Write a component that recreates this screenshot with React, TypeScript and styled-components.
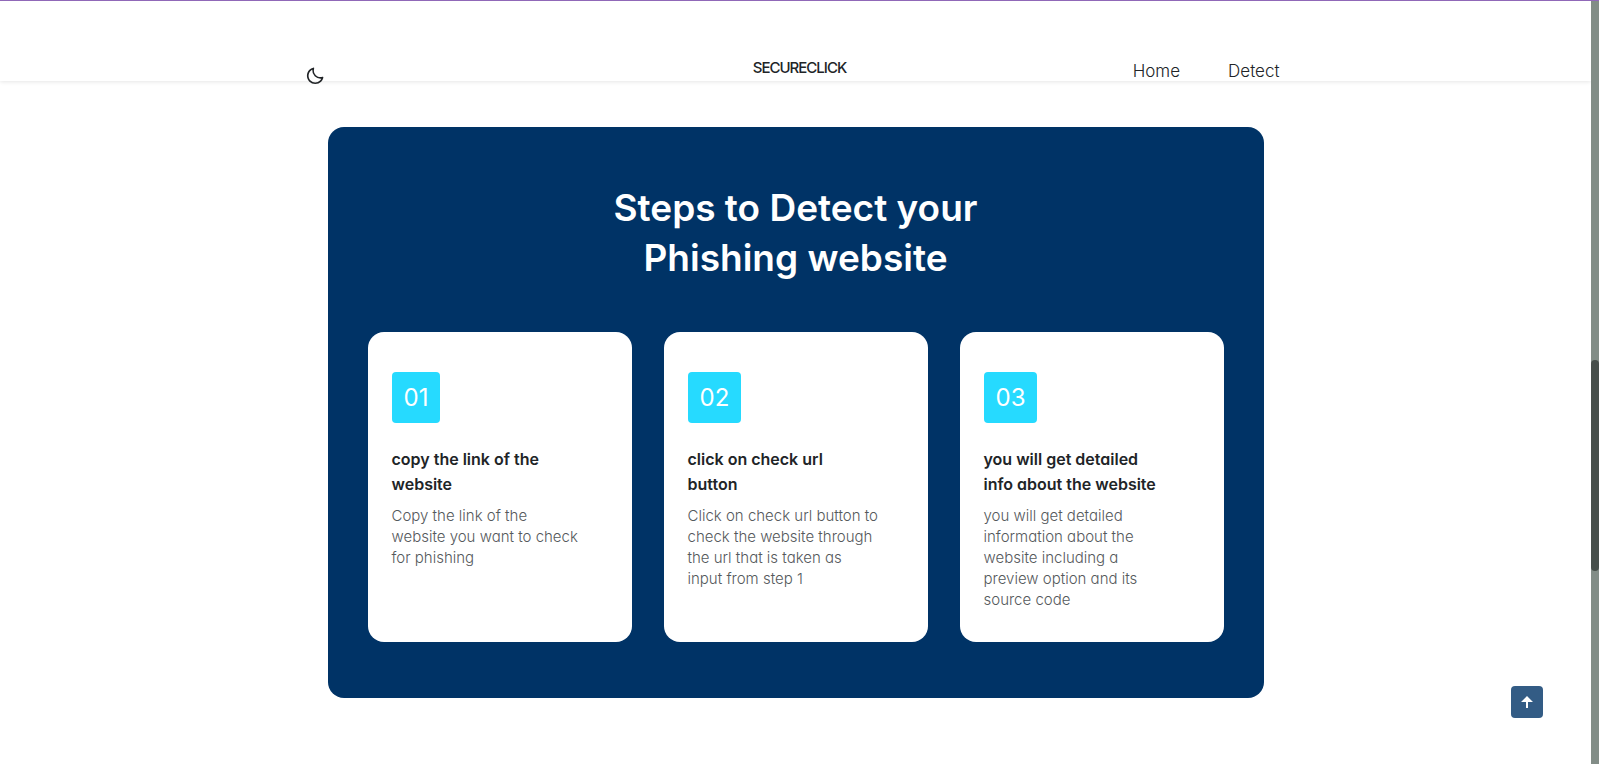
import React from "react";
import styled, { createGlobalStyle } from "styled-components";
import { BiMoon } from "react-icons/bi";

const GlobalStyle = createGlobalStyle`
  *, *::before, *::after { box-sizing: border-box; }
  body {
    margin: 0;
    background: #fff;
    color: #212427;
    font-family: Inter, "Open Sans", "Liberation Sans", sans-serif;
    font-feature-settings: "cv11" 1;
    font-size: 16px;
  }
  h1, h2, h3, p, ol { margin: 0; padding: 0; }
`;

const Window = styled.div`
  display: grid;
  grid-template-columns: minmax(0, 1fr) 8px;
  height: 100vh;
  overflow: hidden;
  border-top: 1px solid #9068b8;
`;

const Page = styled.div`
  min-width: 0;
`;

const Header = styled.header`
  display: flex;
  justify-content: center;
  height: 80px;
  background: #fff;
  box-shadow: 0 1px 4px rgba(0, 0, 0, 0.1);
`;

const Nav = styled.nav`
  display: grid;
  grid-template-columns: 1fr auto 1fr;
  width: 100%;
  max-width: 968px;
  padding-top: 55px;
`;

const ThemeButton = styled.button`
  display: flex;
  justify-self: start;
  align-self: end;
  padding: 0;
  margin: 0 0 -5px -7px;
  border: 0;
  background: none;
  color: #212427;
  font-size: 20px;
  cursor: pointer;
`;

const Logo = styled.a`
  align-self: start;
  margin-left: 8px;
  color: #212427;
  font-size: 15px;
  font-weight: 500;
  line-height: 24px;
  letter-spacing: -1px;
  text-decoration: none;
`;

const Links = styled.div`
  display: flex;
  justify-self: end;
  align-self: end;
  gap: 48px;
`;

const NavLink = styled.a`
  color: #212427;
  font-size: 17px;
  font-weight: 300;
  line-height: 20px;
  text-decoration: none;
`;

const Main = styled.main`
  padding: 46px 24px;
`;

const Panel = styled.section`
  max-width: 936px;
  margin: 0 auto;
  padding: 56px 40px;
  border-radius: 16px;
  background: #003366;
`;

const Heading = styled.h1`
  max-width: 400px;
  margin: 0 auto 49px;
  color: #fff;
  font-size: 37px;
  font-weight: 600;
  line-height: 50px;
  text-align: center;
`;

const Steps = styled.ol`
  display: grid;
  grid-template-columns: repeat(3, minmax(0, 1fr));
  gap: 32px;
  list-style: none;
`;

const Card = styled.li`
  padding: 40px 24px 32px;
  border-radius: 16px;
  background: #fff;
`;

const StepNumber = styled.div`
  width: fit-content;
  margin-bottom: 24px;
  padding: 8px 12px;
  border-radius: 4px;
  background: #26daff;
  color: #fff;
  font-size: 24px;
  line-height: 35px;
`;

const StepTitle = styled.h2`
  margin-bottom: 8px;
  font-size: 16px;
  font-weight: 600;
  line-height: 25px;
  white-space: pre-line;
`;

const StepText = styled.p`
  color: #55595c;
  font-size: 15px;
  font-weight: 300;
  line-height: 21px;
  white-space: pre-line;
`;

const ScrollTrack = styled.div`
  display: grid;
  grid-template-rows: 359px 211px;
  background: #828d87;
`;

const ScrollThumb = styled.div`
  grid-row: 2;
  border-radius: 4px;
  background: #474f4b;
`;

const ToTop = styled.a`
  position: fixed;
  right: 56px;
  bottom: 46px;
  display: flex;
  align-items: center;
  justify-content: center;
  width: 32px;
  height: 32px;
  border-radius: 4px;
  background: #335c85;
  color: #fff;
`;

const steps = [
  {
    number: "01",
    title: "copy the link of the\nwebsite",
    text: "Copy the link of the\nwebsite you want to check\nfor phishing",
  },
  {
    number: "02",
    title: "click on check url\nbutton",
    text: "Click on check url button to\ncheck the website through\nthe url that is taken as\ninput from step 1",
  },
  {
    number: "03",
    title: "you will get detailed\ninfo about the website",
    text: "you will get detailed\ninformation about the\nwebsite including a\npreview option and its\nsource code",
  },
];

export default function App() {
  return (
    <>
      <GlobalStyle />
      <Window>
        <Page>
          <Header>
            <Nav>
              <ThemeButton type="button" aria-label="Toggle dark theme">
                <BiMoon />
              </ThemeButton>
              <Logo href="#home">SECURECLICK</Logo>
              <Links>
                <NavLink href="#home">Home</NavLink>
                <NavLink href="#detect">Detect</NavLink>
              </Links>
            </Nav>
          </Header>
          <Main>
            <Panel>
              <Heading>Steps to Detect your Phishing website</Heading>
              <Steps>
                {steps.map((step) => (
                  <Card key={step.number}>
                    <StepNumber>{step.number}</StepNumber>
                    <StepTitle>{step.title}</StepTitle>
                    <StepText>{step.text}</StepText>
                  </Card>
                ))}
              </Steps>
            </Panel>
          </Main>
        </Page>
        <ScrollTrack>
          <ScrollThumb />
        </ScrollTrack>
      </Window>
      <ToTop href="#home" aria-label="Back to top">
        <svg width="12" height="12" viewBox="0 0 12 12" fill="currentColor" aria-hidden="true">
          <path d="M6 0 12 6H7v6H5V6H0z" />
        </svg>
      </ToTop>
    </>
  );
}
